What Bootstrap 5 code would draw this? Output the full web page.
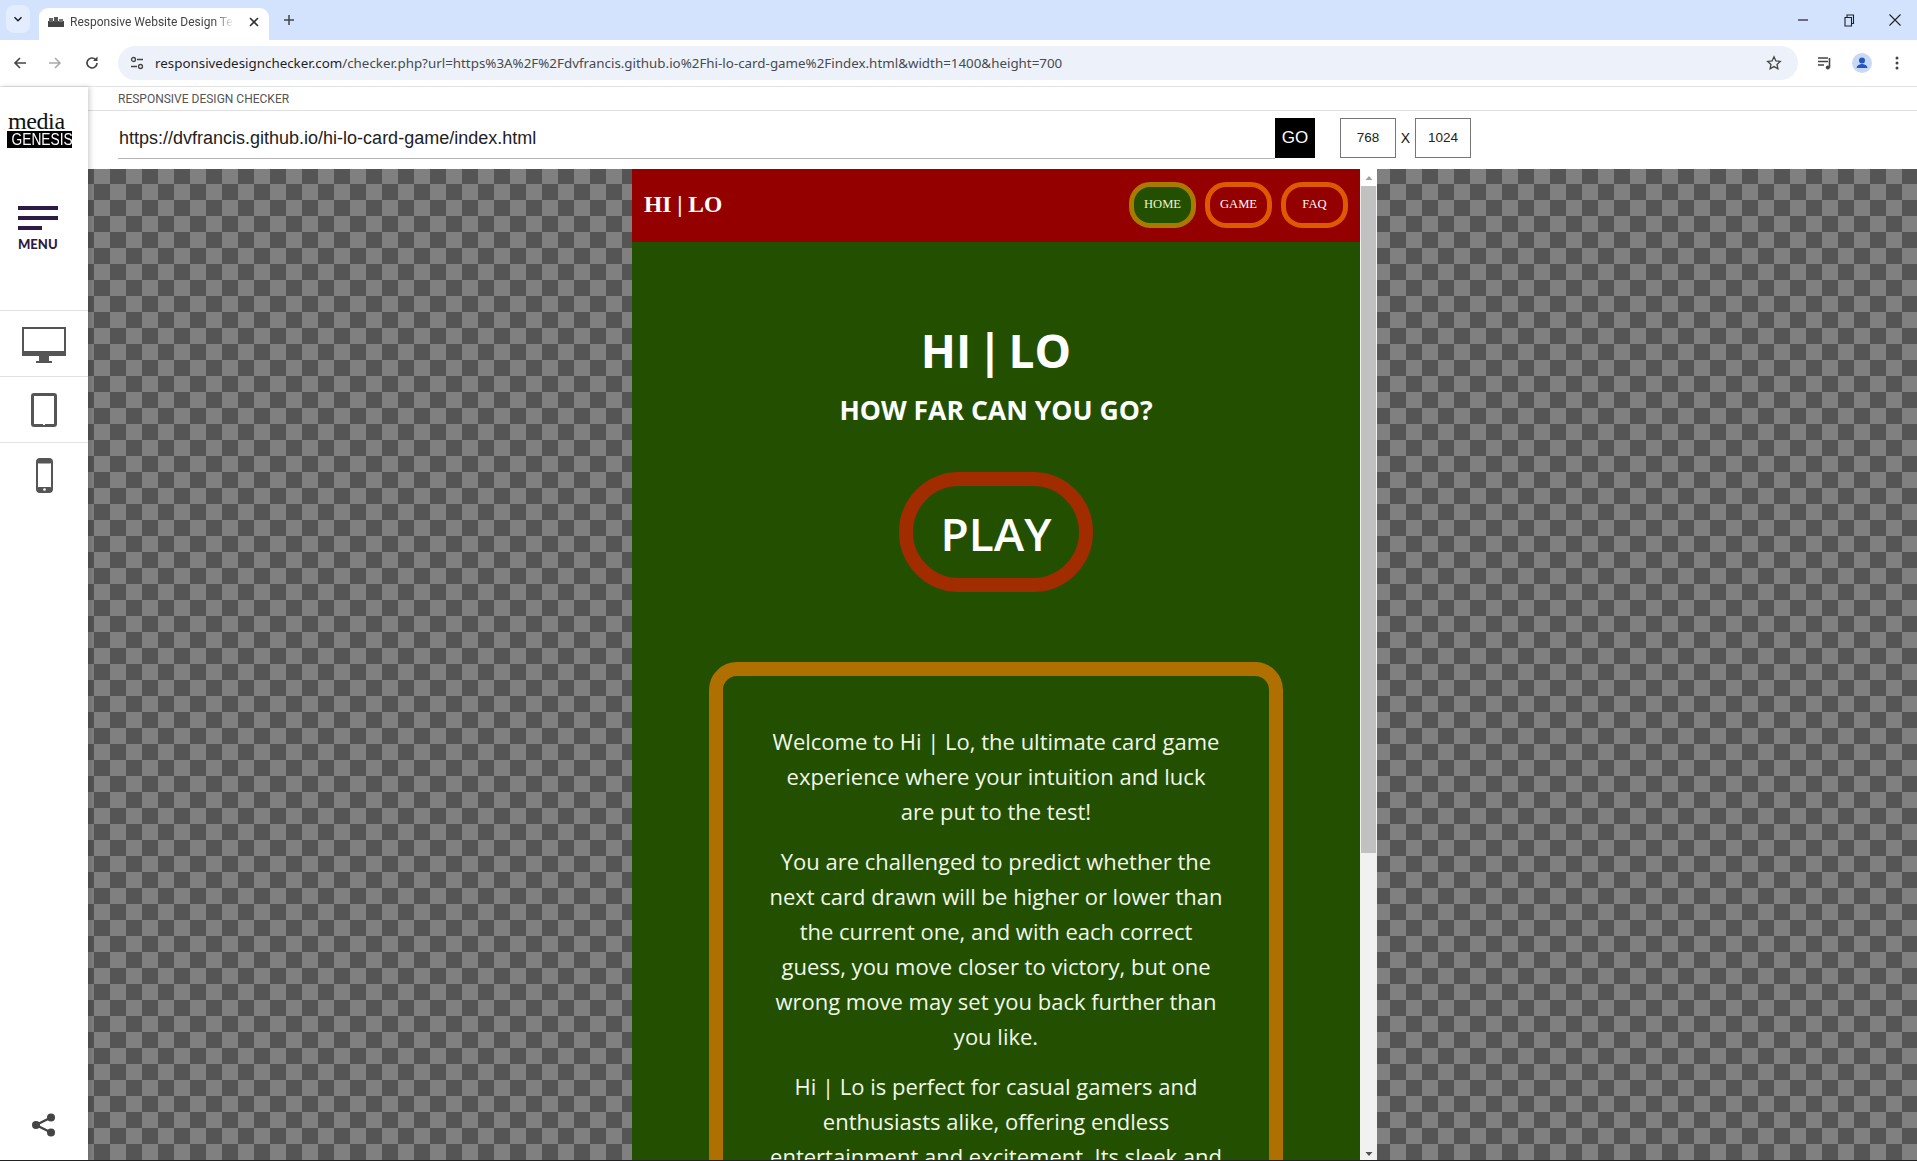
<!DOCTYPE html>
<html lang="en">

<head>
    <meta charset="UTF-8" />
    <meta name="viewport" content="width=device-width, initial-scale=1" />
    <title>Responsive Website Design Tester</title>
    <link href="https://cdn.jsdelivr.net/npm/bootstrap@5.3.0/dist/css/bootstrap.min.css" rel="stylesheet" />
    <style>
        html, body { height: 100%; }

        body {
            margin: 0;
            overflow: hidden;
            background: #fff;
            font-family: "Liberation Sans", sans-serif;
            border-bottom: 1px solid #222;
        }

        /* browser chrome */
        .tab-strip {
            height: 40px;
            background: #d3e3fd;
            padding-left: 6px;
        }

        .tab-menu {
            width: 24px;
            height: 28px;
            margin-top: 5px;
            border-radius: 8px;
            background: #e3edfe;
        }

        .tab-item {
            width: 230px;
            height: 32px;
            margin-left: 9px;
            margin-top: 8px;
            padding: 0 9px 5px;
            background: #fff;
            border-radius: 9px 9px 0 0;
            font: 12px "Roboto", sans-serif;
            color: #444;
        }

        .tab-title {
            width: 164px;
            margin-left: 6px;
            overflow: hidden;
            white-space: nowrap;
            -webkit-mask-image: linear-gradient(to right, #000 88%, transparent);
            mask-image: linear-gradient(to right, #000 88%, transparent);
        }

        .tab-plus { margin-left: 13px; margin-bottom: 1px; }

        .win-btns { gap: 30px; padding-right: 14px; margin-bottom: 1px; }

        .tool-bar {
            height: 47px;
            border-bottom: 1px solid #e4e4e4;
            padding: 0 14px 0 12px;
        }

        .nav-btns { gap: 19px; width: 106px; }

        .nav-btns svg:last-child { margin-left: 2px; }

        .omni-box {
            width: 1680px;
            height: 34px;
            border-radius: 17px;
            background: #edf2fa;
            padding: 0 16px 0 6px;
            font: 13.36px "Noto Sans", sans-serif;
            color: #474a4e;
            white-space: nowrap;
        }

        .omni-site {
            width: 26px;
            height: 26px;
            margin-right: 5px;
            border-radius: 50%;
        }

        .omni-box b { font-weight: 400; color: #1f1f1f; }

        .tool-right { gap: 19px; margin-left: 19px; }

        .tool-right svg:last-child { margin-left: 3px; }

        /* sidebar */
        .main-row { height: 1074px; }

        .side-rail {
            width: 88px;
            flex: none;
            background: #fff;
            box-shadow: 2px 0 5px rgba(0, 0, 0, .18);
            z-index: 2;
        }

        .logo-block {
            height: 88px;
            padding: 24px 0 0 7px;
        }

        .logo-top {
            font: 24px/20px "Liberation Serif", serif;
            color: #111;
            padding-left: 1px;
            letter-spacing: -.4px;
        }

        .logo-bottom {
            width: 65px;
            height: 17px;
            background: #000;
            color: #fff;
            text-align: center;
        }

        .logo-bottom span {
            display: block;
            font: 16px/17px "Liberation Sans", sans-serif;
            transform: scaleX(.86);
            white-space: nowrap;
        }

        .menu-block {
            height: 135px;
            padding: 31px 0 0 18px;
        }

        .menu-line {
            width: 40px;
            height: 3.5px;
            margin-bottom: 6.5px;
            background: #2d1a47;
        }

        .menu-line.short-line { width: 24px; margin-bottom: 4px; }

        .menu-word {
            font: 900 13px/20px "Lato", sans-serif;
            color: #2d1a47;
        }

        .device-row {
            height: 66px;
            border-top: 1px solid #e2e2e2;
        }

        .device-row:last-of-type { border-bottom: 1px solid #e2e2e2; height: 67px; }

        .device-row.monitor-row { padding-top: 4px; }

        .share-block { padding: 0 0 24px 0; }

        /* checker area */
        .check-head { height: 24px; padding: 4px 0 0 30px; font: 12px/16px "Roboto", sans-serif; color: #555; border-bottom: 1px solid #dedede; }

        .url-row { height: 58px; padding: 7px 0 10px 30px; }

        .url-field {
            width: 1157px;
            height: 41px;
            padding: 7px 0 0 1px;
            border-bottom: 1px solid #b4b4b4;
            font-size: 18px;
            color: #222;
        }

        .go-btn {
            width: 40px;
            height: 40px;
            background: #000;
            color: #fff;
            font-size: 17px;
            border: 0;
            padding: 0;
        }

        .size-box {
            width: 56px;
            height: 40px;
            border: 1px solid #777;
            font-size: 13.5px;
            color: #222;
        }

        .size-box.first-size { margin-left: 25px; }

        .size-x { width: 19px; font-size: 14px; color: #111; }

        .stage {
            height: 992px;
            padding-left: 544px;
            background-color: #808080;
            background-image: conic-gradient(#808080 25%, #555 0 50%, #808080 0 75%, #555 0);
            background-size: 32px 32px;
            background-position: 6px 15px;
            overflow: hidden;
        }

        .site-frame { width: 745px; height: 992px; overflow: hidden; }

        /* the tested site */
        .site-page {
            width: 728px;
            flex: none;
            background: #225000;
            color: #fff;
            font-family: "Open Sans", sans-serif;
        }

        .site-nav {
            height: 73px;
            background: #940000;
            padding: 0 12px;
        }

        .site-logo {
            font: 700 23.5px "Liberation Serif", serif;
            color: #fff;
            margin-bottom: 2px;
        }

        .site-links { gap: 9px; margin-bottom: 2px; }

        .site-link {
            width: 67px;
            height: 46px;
            border: 5px solid #dd5a00;
            border-radius: 21px;
            font: 12.6px "Liberation Serif", serif;
            color: #fff;
            text-decoration: none;
        }

        .site-link.now {
            background: #225000;
            border-color: #a87a00;
            color: #eef5c8;
        }

        .hero-title {
            margin: 76px 0 0;
            font-size: 46px;
            line-height: 64px;
            font-weight: 700;
            word-spacing: -6px;
        }

        .hero-sub {
            margin: 11px 0 0;
            font-size: 26.6px;
            line-height: 34px;
            font-weight: 700;
        }

        .play-btn {
            width: 194px;
            height: 120px;
            margin-top: 45px;
            padding-top: 3px;
            border: 14px solid #a02c00;
            border-radius: 60px;
            background: transparent;
            color: #fff;
            font-size: 46px;
            font-weight: 600;
            text-decoration: none;
        }

        .intro-panel {
            width: 574px;
            height: 600px;
            margin-top: 70px;
            padding: 48px 20px 0;
            border: 14px solid #b07000;
            border-radius: 28px;
            font-size: 22px;
            line-height: 35px;
            color: #f2f7ea;
        }

        .intro-panel p { margin: 0 0 15px; }

        /* fake scrollbar of the frame */
        .frame-scroll {
            width: 17px;
            flex: none;
            background: #f1f1f1;
        }

        .scroll-up { height: 17px; background: #fff; }

        .scroll-thumb {
            height: 667px;
            margin: 0 1px;
            background: #c1c1c1;
        }
    </style>
</head>

<body>

    <div class="tab-strip d-flex">
        <div class="tab-menu d-flex align-items-center justify-content-center">
            <svg width="10" height="10" viewBox="0 0 10 10"><path d="M1.5 3.2 5 6.7l3.5-3.500" fill="none" stroke="#1f1f1f" stroke-width="1.5"/></svg>
        </div>
        <div class="tab-item d-flex align-items-center">
            <svg width="16" height="10" viewBox="0 0 16 10"><rect y="4" width="16" height="6" fill="#444"/><rect x="1" y="1" width="4" height="4" fill="#666"/><rect x="6" y="0" width="4" height="5" fill="#555"/><rect x="11" y="2" width="4" height="3" fill="#777"/></svg>
            <div class="tab-title">Responsive Website Design Tester</div>
            <svg class="ms-auto" width="12" height="12" viewBox="0 0 12 12"><path d="M2 2l8 8M10 2l-8 8" stroke="#333" stroke-width="1.6"/></svg>
        </div>
        <svg class="tab-plus align-self-center" width="14" height="14" viewBox="0 0 14 14"><path d="M7 2v10M2 7h10" stroke="#444" stroke-width="1.5"/></svg>
        <div class="win-btns d-flex align-items-center ms-auto">
            <svg width="16" height="16" viewBox="0 0 16 16"><path d="M3 8h10" stroke="#222" stroke-width="1.2"/></svg>
            <svg width="16" height="16" viewBox="0 0 16 16"><path d="M4 5.500h6.500V14H4zM6 5.500V3h6.500v8.500h-2" fill="none" stroke="#222" stroke-width="1.1"/></svg>
            <svg width="16" height="16" viewBox="0 0 16 16"><path d="M2.500 2.500l11 11M13.500 2.500l-11 11" stroke="#222" stroke-width="1.100"/></svg>
        </div>
    </div>

    <div class="tool-bar d-flex align-items-center">
        <div class="nav-btns d-flex align-items-center">
            <svg width="16" height="16" viewBox="0 0 16 16"><path d="M14 8H3M8 3 3 8l5 5" fill="none" stroke="#444" stroke-width="1.600"/></svg>
            <svg width="16" height="16" viewBox="0 0 16 16"><path d="M2 8h11M8 3l5 5-5 5" fill="none" stroke="#aaa" stroke-width="1.600"/></svg>
            <svg width="16" height="16" viewBox="0 0 16 16"><path d="M13 8a5 5 0 1 1-1.500-3.600" fill="none" stroke="#444" stroke-width="1.600"/><path d="M13.500 1.500v4.500H9z" fill="#444"/></svg>
        </div>
        <div class="omni-box d-flex align-items-center">
            <div class="omni-site d-flex align-items-center justify-content-center">
                <svg width="16" height="16" viewBox="0 0 16 16"><circle cx="4.500" cy="4.500" r="2" fill="none" stroke="#444" stroke-width="1.300"/><path d="M8 4.500h6M2 11.500h6" stroke="#444" stroke-width="1.300"/><circle cx="11.500" cy="11.500" r="2" fill="none" stroke="#444" stroke-width="1.300"/></svg>
            </div>
            <span><b>responsivedesignchecker.com</b>/checker.php?url=https%3A%2F%2Fdvfrancis.github.io%2Fhi-lo-card-game%2Findex.html&amp;width=1400&amp;height=700</span>
            <svg class="ms-auto" width="16" height="16" viewBox="0 0 16 16"><path d="M8 1.800l1.900 4.100 4.400.5-3.300 3 .9 4.400L8 11.600l-3.900 2.200.9-4.400-3.300-3 4.400-.5z" fill="none" stroke="#444" stroke-width="1.300"/></svg>
        </div>
        <div class="tool-right d-flex align-items-center">
            <svg width="16" height="16" viewBox="0 0 16 16"><path d="M1 3h10M1 6.500h10M1 10h6" stroke="#444" stroke-width="1.400"/><path d="M12.500 3v9.500" stroke="#444" stroke-width="1.600"/><circle cx="10.800" cy="12.500" r="2" fill="#444"/></svg>
            <svg width="20" height="20" viewBox="0 0 20 20"><circle cx="10" cy="10" r="10" fill="#c9d9f5"/><circle cx="10" cy="7.500" r="3" fill="#2257bd"/><path d="M4.500 15c.5-3 3-4 5.500-4s5 1 5.500 4z" fill="#2257bd"/></svg>
            <svg width="6" height="16" viewBox="0 0 6 16"><circle cx="3" cy="3" r="1.500" fill="#444"/><circle cx="3" cy="8" r="1.500" fill="#444"/><circle cx="3" cy="13" r="1.500" fill="#444"/></svg>
        </div>
    </div>

    <div class="main-row d-flex">
        <aside class="side-rail d-flex flex-column">
            <div class="logo-block">
                <div class="logo-top">media</div>
                <div class="logo-bottom"><span>GENESIS</span></div>
            </div>
            <div class="menu-block">
                <div class="menu-line"></div>
                <div class="menu-line"></div>
                <div class="menu-line short-line"></div>
                <div class="menu-word">MENU</div>
            </div>
            <div class="device-row monitor-row d-flex align-items-center justify-content-center">
                <svg width="44" height="37" viewBox="0 0 44 37"><rect x="1" y="1" width="42" height="27" fill="#fff" stroke="#555" stroke-width="2"/><rect y="24" width="44" height="5" fill="#555"/><path d="M17 29h10v5h3v2H14v-2h3z" fill="#555"/></svg>
            </div>
            <div class="device-row d-flex align-items-center justify-content-center">
                <svg width="26" height="34" viewBox="0 0 26 34"><rect x="1.500" y="1.500" width="23" height="31" rx="1.500" fill="#fff" stroke="#555" stroke-width="3"/><rect x="12" y="30.500" width="2" height="1.500" fill="#fff"/></svg>
            </div>
            <div class="device-row d-flex align-items-center justify-content-center">
                <svg width="17" height="35" viewBox="0 0 17 35"><rect x="1" y="1" width="15" height="33" rx="3" fill="#fff" stroke="#555" stroke-width="2"/><rect x="1" y="1" width="15" height="4.500" rx="2" fill="#555"/><rect x="1" y="29" width="15" height="5" rx="2" fill="#555"/><circle cx="8.500" cy="31.500" r="1.300" fill="#fff"/></svg>
            </div>
            <div class="share-block mt-auto d-flex justify-content-center">
                <svg width="26" height="24" viewBox="0 0 26 24"><path d="M20 4.500 5 12l15 7.500" fill="none" stroke="#444" stroke-width="2.400"/><circle cx="20" cy="4.500" r="4" fill="#444"/><circle cx="5" cy="12" r="4" fill="#444"/><circle cx="20" cy="19.500" r="4" fill="#444"/></svg>
            </div>
        </aside>

        <div class="flex-grow-1">
            <div class="check-head">RESPONSIVE DESIGN CHECKER</div>
            <div class="url-row d-flex">
                <div class="url-field">https://dvfrancis.github.io/hi-lo-card-game/index.html</div>
                <button class="go-btn" type="button">GO</button>
                <div class="size-box first-size d-flex align-items-center justify-content-center">768</div>
                <div class="size-x d-flex align-items-center justify-content-center">X</div>
                <div class="size-box d-flex align-items-center justify-content-center">1024</div>
            </div>
            <div class="stage">
                <div class="site-frame d-flex">
                    <div class="site-page">
                        <nav class="site-nav d-flex align-items-center justify-content-between">
                            <div class="site-logo">HI | LO</div>
                            <div class="site-links d-flex">
                                <a class="site-link now d-flex align-items-center justify-content-center" href="#">HOME</a>
                                <a class="site-link d-flex align-items-center justify-content-center" href="#">GAME</a>
                                <a class="site-link d-flex align-items-center justify-content-center" href="#">FAQ</a>
                            </div>
                        </nav>
                        <div class="d-flex flex-column align-items-center text-center">
                            <h1 class="hero-title">HI | LO</h1>
                            <h2 class="hero-sub">HOW FAR CAN YOU GO?</h2>
                            <a class="play-btn d-flex align-items-center justify-content-center" href="#">PLAY</a>
                            <div class="intro-panel">
                                <p>Welcome to Hi | Lo, the ultimate card game<br>experience where your intuition and luck<br>are put to the test!</p>
                                <p>You are challenged to predict whether the<br>next card drawn will be higher or lower than<br>the current one, and with each correct<br>guess, you move closer to victory, but one<br>wrong move may set you back further than<br>you like.</p>
                                <p>Hi | Lo is perfect for casual gamers and<br>enthusiasts alike, offering endless<br>entertainment and excitement. Its sleek and</p>
                            </div>
                        </div>
                    </div>
                    <div class="frame-scroll d-flex flex-column">
                        <div class="scroll-up d-flex align-items-center justify-content-center">
                            <svg width="8" height="6" viewBox="0 0 8 6"><path d="M4 1l3.500 4H.5z" fill="#a0a0a0"/></svg>
                        </div>
                        <div class="scroll-thumb"></div>
                        <div class="mt-auto d-flex justify-content-center pb-1">
                            <svg width="8" height="6" viewBox="0 0 8 6"><path d="M4 5 .5 1h7z" fill="#505050"/></svg>
                        </div>
                    </div>
                </div>
            </div>
        </div>
    </div>

    <script src="https://cdn.jsdelivr.net/npm/bootstrap@5.3.0/dist/js/bootstrap.bundle.min.js"></script>
</body>

</html>
